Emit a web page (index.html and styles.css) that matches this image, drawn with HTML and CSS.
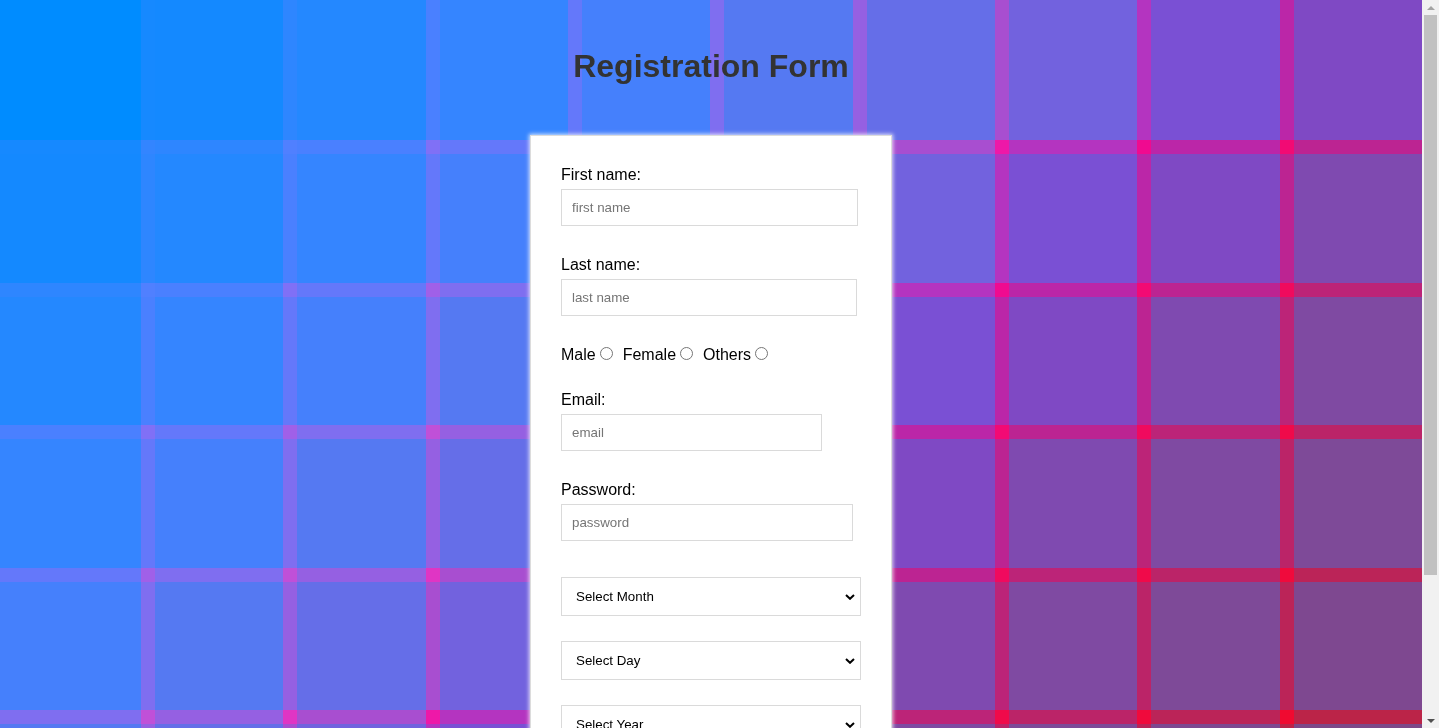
FILE: index.html
```html
<!DOCTYPE html>
<html lang="en">
<head>
<meta charset="utf-8">
<title>Registration Form</title>
<link rel="stylesheet" href="styles.css">
</head>
<body>
<div class="bg" aria-hidden="true">
  <div class="c s0"></div><div class="c s1"></div><div class="c s2"></div><div class="c s3"></div><div class="c s4"></div><div class="c s5"></div><div class="c s6"></div><div class="c s7"></div><div class="c s8"></div><div class="c s9"></div>
  <div class="c s1"></div><div class="c s2"></div><div class="c s3"></div><div class="c s4"></div><div class="c s5"></div><div class="c s6"></div><div class="c s7"></div><div class="c s8"></div><div class="c s9"></div><div class="c s10"></div>
  <div class="c s2"></div><div class="c s3"></div><div class="c s4"></div><div class="c s5"></div><div class="c s6"></div><div class="c s7"></div><div class="c s8"></div><div class="c s9"></div><div class="c s10"></div><div class="c s11"></div>
  <div class="c s3"></div><div class="c s4"></div><div class="c s5"></div><div class="c s6"></div><div class="c s7"></div><div class="c s8"></div><div class="c s9"></div><div class="c s10"></div><div class="c s11"></div><div class="c s12"></div>
  <div class="c s4"></div><div class="c s5"></div><div class="c s6"></div><div class="c s7"></div><div class="c s8"></div><div class="c s9"></div><div class="c s10"></div><div class="c s11"></div><div class="c s12"></div><div class="c s13"></div>
  <div class="c s5"></div><div class="c s6"></div><div class="c s7"></div><div class="c s8"></div><div class="c s9"></div><div class="c s10"></div><div class="c s11"></div><div class="c s12"></div><div class="c s13"></div><div class="c s14"></div>
</div>

<div class="scrollbar" aria-hidden="true">
  <div class="sb-btn"><span class="sb-up"></span></div>
  <div class="sb-thumb"></div>
  <div class="sb-rest"></div>
  <div class="sb-btn"><span class="sb-down"></span></div>
</div>

<main class="page">
  <h1 class="title">Registration Form</h1>
  <form class="card">
    <div class="field">
      <label class="lbl" for="fn">First name:</label>
      <input class="txt w-first" id="fn" type="text" placeholder="first name">
    </div>
    <div class="field">
      <label class="lbl" for="ln">Last name:</label>
      <input class="txt w-last" id="ln" type="text" placeholder="last name">
    </div>
    <div class="gender"><label for="gm">Male</label><input class="radio" id="gm" type="radio" name="g"><label for="gf">Female</label><input class="radio" id="gf" type="radio" name="g"><label for="go">Others</label><input class="radio" id="go" type="radio" name="g"></div>
    <div class="field">
      <label class="lbl" for="em">Email:</label>
      <input class="txt w-email" id="em" type="email" placeholder="email">
    </div>
    <div class="field field-last">
      <label class="lbl" for="pw">Password:</label>
      <input class="txt w-pass" id="pw" type="password" placeholder="password">
    </div>
    <div class="selects">
      <div class="sel-wrap">
        <select class="sel"><option>Select Month</option></select>
        <svg class="chev" width="10" height="6" viewBox="0 0 10 6"><path d="M1 1 L5 4.8 L9 1" fill="none" stroke="#000" stroke-width="2"/></svg>
      </div>
      <div class="sel-wrap">
        <select class="sel"><option>Select Day</option></select>
        <svg class="chev" width="10" height="6" viewBox="0 0 10 6"><path d="M1 1 L5 4.8 L9 1" fill="none" stroke="#000" stroke-width="2"/></svg>
      </div>
      <div class="sel-wrap">
        <select class="sel"><option>Select Year</option></select>
        <svg class="chev" width="10" height="6" viewBox="0 0 10 6"><path d="M1 1 L5 4.8 L9 1" fill="none" stroke="#000" stroke-width="2"/></svg>
      </div>
    </div>
  </form>
</main>
</body>
</html>
```
FILE: styles.css
```css
html, body {
  margin: 0;
  padding: 0;
}

body {
  font-family: "Liberation Sans", Arial, sans-serif;
  color: #000;
}

/* plaid backdrop */
.bg {
  position: fixed;
  top: 0;
  left: 0;
  right: 17px;
  bottom: 0;
  z-index: -1;
  overflow: hidden;
  display: grid;
  grid-template-columns: 141px repeat(9, 1fr);
  grid-template-rows: 140px repeat(5, 142.5px);
}

.c {
  --vw: 14px;
  --hh: 14px;
  background:
    linear-gradient(var(--x), var(--x)) 0 0 / var(--vw) var(--hh) no-repeat,
    linear-gradient(var(--l), var(--l)) 0 0 / var(--vw) 100% no-repeat,
    linear-gradient(var(--l), var(--l)) 0 0 / 100% var(--hh) no-repeat,
    var(--t);
}

.c:nth-child(10n+1) { --vw: 0px; }
.c:nth-child(-n+10) { --hh: 0px; }

.s0  { --t: #008cff; --l: #0a8bff; --x: #1a89ff; }
.s1  { --t: #1489ff; --l: #1689ff; --x: #2488ff; }
.s2  { --t: #2488ff; --l: #2e86ff; --x: #3385ff; }
.s3  { --t: #3585ff; --l: #4a80ff; --x: #5080ff; }
.s4  { --t: #4580fc; --l: #6478fa; --x: #8070f6; }
.s5  { --t: #5579f2; --l: #7f6ef0; --x: #a060e8; }
.s6  { --t: #656ee8; --l: #9560e2; --x: #c050d8; }
.s7  { --t: #7262de; --l: #a84ed0; --x: #e035c4; }
.s8  { --t: #7a50d4; --l: #b434c0; --x: #ee18a8; }
.s9  { --t: #7f49c4; --l: #bb26a8; --x: #f00a90; }
.s10 { --t: #7f4ab0; --l: #bc2492; --x: #f20a74; }
.s11 { --t: #7f4aa2; --l: #bc2478; --x: #f00a5e; }
.s12 { --t: #7e4a98; --l: #bb2468; --x: #f00a4a; }
.s13 { --t: #7e4890; --l: #bb2458; --x: #f00a3c; }
.s14 { --t: #7d4888; --l: #bb2448; --x: #f00a30; }

/* window scrollbar */
.scrollbar {
  position: fixed;
  top: 0;
  right: 0;
  bottom: 0;
  width: 17px;
  background: #f1f1f1;
  display: flex;
  flex-direction: column;
}

.sb-btn {
  height: 15px;
  display: flex;
  align-items: center;
  justify-content: center;
}

.sb-up {
  width: 0;
  height: 0;
  border-left: 4px solid transparent;
  border-right: 4px solid transparent;
  border-bottom: 4px solid #a3a3a3;
}

.sb-down {
  width: 0;
  height: 0;
  border-left: 4px solid transparent;
  border-right: 4px solid transparent;
  border-top: 4px solid #505050;
}

.sb-thumb {
  height: 560px;
  margin: 0 2px;
  background: #c1c1c1;
}

.sb-rest {
  flex: 1;
}

/* page */
.page {
  margin-right: 17px;
  padding: 48px 0 129px;
}

.title {
  margin: 0 0 50px;
  font-size: 32px;
  line-height: 37px;
  font-weight: bold;
  text-align: center;
  color: #333;
}

.card {
  box-sizing: border-box;
  width: 362px;
  margin: 0 auto;
  padding: 30px 30px 30px;
  background: #fff;
  border: 1px solid #dcdcdc;
  box-shadow: 0 0 4px 1px rgba(255, 255, 255, 0.8);
}

.field {
  margin-bottom: 30px;
}

.field-last {
  margin-bottom: 36px;
}

.lbl {
  display: block;
  font-size: 16px;
  line-height: 18px;
  margin-bottom: 5px;
}

.txt {
  display: block;
  box-sizing: border-box;
  height: 37px;
  margin: 0;
  padding: 0 10px;
  border: 1px solid #dadada;
  border-radius: 0;
  background: #fff;
  font-family: "Liberation Sans", Arial, sans-serif;
  font-size: 13.333px;
  color: #000;
  outline: none;
}

.txt::placeholder {
  color: #757575;
}

.w-first { width: 297px; }
.w-last  { width: 296px; }
.w-email { width: 261px; }
.w-pass  { width: 292px; }

.gender {
  font-size: 16px;
  line-height: 18px;
  margin-bottom: 27px;
  white-space: nowrap;
}

.radio {
  appearance: none;
  -webkit-appearance: none;
  display: inline-block;
  box-sizing: border-box;
  width: 13px;
  height: 13px;
  margin: 0 10px 0 4px;
  border: 1px solid #767676;
  border-radius: 50%;
  background: #fff;
  vertical-align: baseline;
}

.selects {
  display: flex;
  flex-direction: column;
  gap: 25px;
}

.sel-wrap {
  position: relative;
  width: 300px;
}

.sel {
  appearance: none;
  -webkit-appearance: none;
  display: block;
  box-sizing: border-box;
  width: 300px;
  height: 39px;
  margin: 0;
  padding: 0 0 0 14px;
  border: 1px solid #dadada;
  border-radius: 0;
  background: #fff;
  font-family: "Liberation Sans", Arial, sans-serif;
  font-size: 13.333px;
  color: #000;
}

.chev {
  position: absolute;
  right: 6px;
  top: 17px;
  pointer-events: none;
}
```
